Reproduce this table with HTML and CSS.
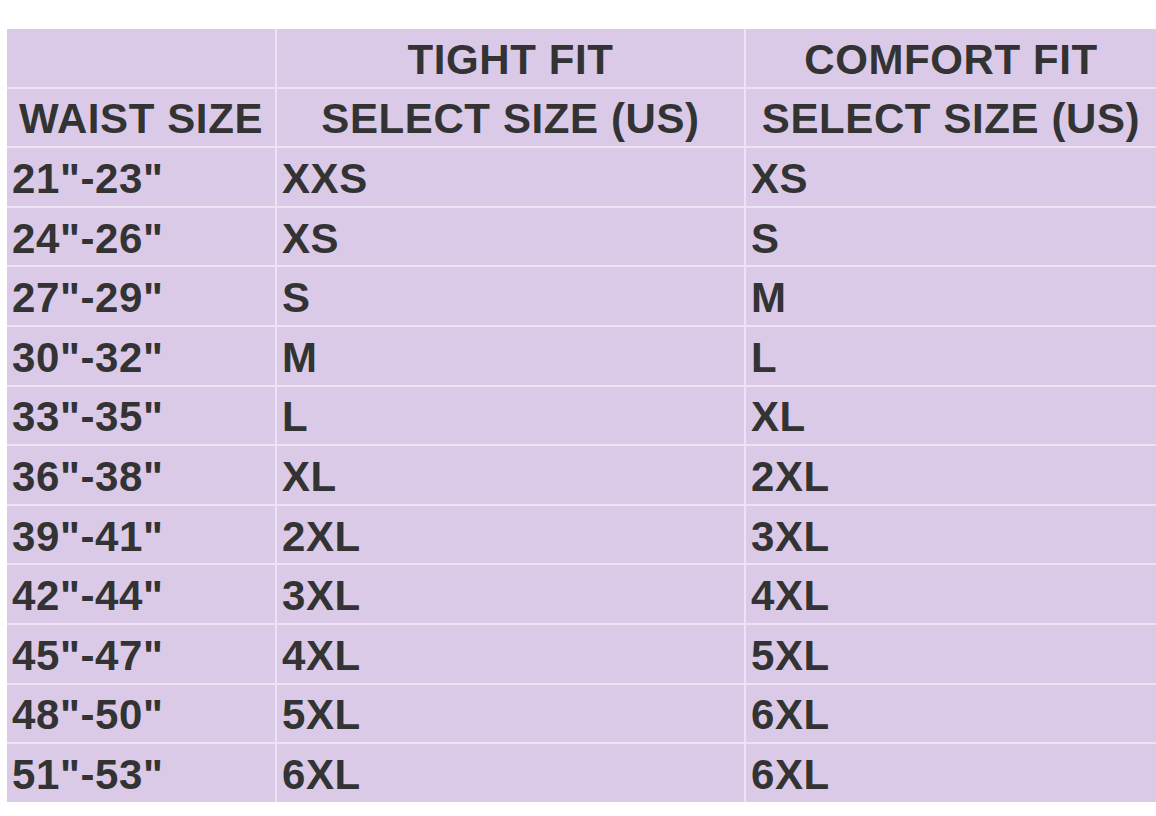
FILE: index.html
```html
<!DOCTYPE html>
<html>
<head>
<meta charset="utf-8">
<link rel="stylesheet" href="styles.css">
</head>
<body>
<div class="chart">
  <div class="cell head"></div>
  <div class="cell head">TIGHT FIT</div>
  <div class="cell head">COMFORT FIT</div>
  <div class="cell head">WAIST SIZE</div>
  <div class="cell head">SELECT SIZE (US)</div>
  <div class="cell head">SELECT SIZE (US)</div>

  <div class="cell">21"-23"</div><div class="cell">XXS</div><div class="cell">XS</div>
  <div class="cell">24"-26"</div><div class="cell">XS</div><div class="cell">S</div>
  <div class="cell">27"-29"</div><div class="cell">S</div><div class="cell">M</div>
  <div class="cell">30"-32"</div><div class="cell">M</div><div class="cell">L</div>
  <div class="cell">33"-35"</div><div class="cell">L</div><div class="cell">XL</div>
  <div class="cell">36"-38"</div><div class="cell">XL</div><div class="cell">2XL</div>
  <div class="cell">39"-41"</div><div class="cell">2XL</div><div class="cell">3XL</div>
  <div class="cell">42"-44"</div><div class="cell">3XL</div><div class="cell">4XL</div>
  <div class="cell">45"-47"</div><div class="cell">4XL</div><div class="cell">5XL</div>
  <div class="cell">48"-50"</div><div class="cell">5XL</div><div class="cell">6XL</div>
  <div class="cell">51"-53"</div><div class="cell">6XL</div><div class="cell">6XL</div>
</div>
</body>
</html>
```

FILE: styles.css
```css
html, body {
  margin: 0;
  padding: 0;
  background: #ffffff;
  overflow: hidden;
}

body {
  padding-top: 29px;
  padding-left: 7px;
  font-family: "Liberation Sans", Arial, sans-serif;
}

.chart {
  width: 1149px;
  display: grid;
  grid-template-columns: 268px 467px 1fr;
  grid-auto-rows: 57.6px;
  gap: 2px;
  background: #ede4f3;
}

.cell {
  background: #dacae8;
  color: #333333;
  font-weight: bold;
  font-size: 42px;
  letter-spacing: 0.6px;
  line-height: 1;
  display: flex;
  align-items: center;
  padding-left: 5px;
  padding-top: 4px;
  white-space: nowrap;
}

.head {
  justify-content: center;
  padding-left: 0;
}
```
